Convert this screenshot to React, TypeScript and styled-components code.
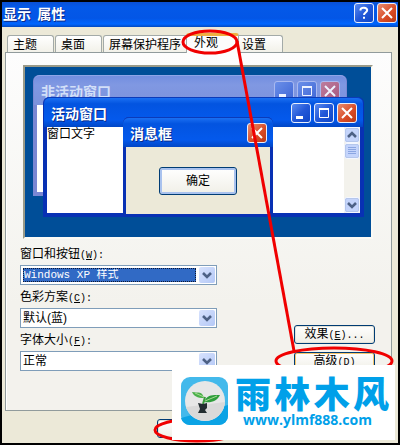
import React from 'react';
import styled, { createGlobalStyle, css } from 'styled-components';

const Global = createGlobalStyle`
  * { box-sizing: border-box; }
  body { margin: 0; background: #000; }
  body, button, select { font-family: "Liberation Sans", "Noto Sans CJK SC", sans-serif; font-size: 12px; line-height: 14px; color: #000; }
  button, select { margin: 0; }
`;

const Screen = styled.main`
  position: relative;
  min-height: 100vh;
  padding: 2px;
  background: #000;
  display: flex;
  overflow: hidden;
`;

const Dialog = styled.section`
  flex: 1;
  min-width: 0;
  display: flex;
  flex-direction: column;
  background: #ece9d8;
`;

const TitleBar = styled.header`
  display: flex;
  align-items: center;
  justify-content: space-between;
  height: 25px;
  padding: 0 1px 3px;
  background: linear-gradient(#0a50d4, #0459e8 20%, #0356e6 65%, #0066ff 88%, #0148c0);
`;

const titleText = css`
  margin: 0;
  font-size: 14px;
  line-height: 16px;
  font-weight: 700;
  font-family: "Noto Sans CJK SC", sans-serif;
`;

const Title = styled.h1`
  ${titleText}
  color: #fff;
  text-shadow: 1px 1px #0a2a88;
`;

const Controls = styled.div`
  display: flex;
  gap: 3px;
`;

const ControlButton = styled.button<{ $close?: boolean; $faded?: boolean }>`
  width: 20px;
  height: 20px;
  padding: 0;
  display: flex;
  border: 1px solid ${p => (p.$faded ? '#a9b9f0' : '#e9effc')};
  border-radius: 3px;
  background: ${p =>
    p.$close
      ? p.$faded
        ? 'linear-gradient(135deg, #bd7d9d, #a85880)'
        : 'linear-gradient(135deg, #e88c70, #d84a24 60%, #b83a18)'
      : p.$faded
        ? 'linear-gradient(135deg, #6b8fe9, #4067d5)'
        : 'linear-gradient(135deg, #5b8bf0, #2358d8 50%, #0e46c8)'};
`;

const Body = styled.div`
  flex: 1;
  display: flex;
  flex-direction: column;
  padding: 6px 6px 32px 3px;
`;

const Tabs = styled.nav`
  display: flex;
  align-items: flex-end;
  gap: 1px;
  height: 19px;
  padding-left: 2px;
`;

const Tab = styled.button<{ $active?: boolean }>`
  height: ${p => (p.$active ? 20 : 17)}px;
  padding: 2px 8px 0 5px;
  min-width: 47px;
  border: 1px solid #a3aaa8;
  border-bottom: 0;
  border-radius: 3px 3px 0 0;
  background: linear-gradient(#fff, #f2f1e9);
  white-space: nowrap;
  text-align: left;
  ${p => p.$active && css`
    border-top: 3px solid #efaf42;
    background: #fcfcfc;
    margin: 0 -4px -1px -5px;
    padding: 0 20px 4px 7px;
    z-index: 1;
  `}
`;

const Panel = styled.div`
  flex: 1;
  padding: 12px 16px 8px 14px;
  border: 1px solid #919b9c;
  box-shadow: inset 1px 0 #fff;
  background: linear-gradient(#fdfdfd, #f3f2ed 70%);
`;

const Preview = styled.div`
  position: relative;
  height: 174px;
  margin: 0 2px 8px 3px;
  border: 2px solid;
  border-color: #9a9a88 #fbfaf5 #fbfaf5 #9a9a88;
  background: #004e98;
`;

const kinds = {
  inactive: css`
    top: 8px; right: 24px; bottom: 41px; left: 8px;
    border: 4px solid #7a87d3;
    background: #7f94de;
  `,
  active: css`
    top: 30px; right: 7px; bottom: 20px; left: 18px;
    border: 4px solid #0831b4;
    background: #0054e3;
  `,
  message: css`
    top: 50px; right: 98px; bottom: 20px; left: 98px;
    border: 3px solid #0831b4;
    background: #0054e3;
  `,
};

const MiniWindow = styled.section<{ $kind: keyof typeof kinds }>`
  position: absolute;
  display: flex;
  flex-direction: column;
  ${p => kinds[p.$kind]}
  border-top: 0;
  border-radius: 6px 6px 0 0;
`;

const MiniTitleBar = styled.header<{ $faded?: boolean }>`
  height: 30px;
  margin: 0 -3px;
  padding: 0 6px 0 7px;
  display: flex;
  align-items: center;
  justify-content: space-between;
  border-top: 1px solid ${p => (p.$faded ? '#8fa5e8' : '#0b3bb9')};
  border-radius: 6px 6px 0 0;
  background: ${p =>
    p.$faded
      ? 'linear-gradient(#738ee0, #8098e2 30%, #7c92dc)'
      : 'linear-gradient(#1b70f2, #0354e0 20%, #0459ec 75%, #0146c5)'};
`;

const MiniTitle = styled.h2<{ $faded?: boolean }>`
  ${titleText}
  color: ${p => (p.$faded ? '#d2dff8' : '#fff')};
  text-shadow: ${p => (p.$faded ? 'none' : '1px 1px #0a2a88')};
`;

const MiniBody = styled.div<{ $beige?: boolean }>`
  flex: 1;
  display: flex;
  justify-content: ${p => (p.$beige ? 'center' : 'space-between')};
  align-items: ${p => (p.$beige ? 'center' : 'stretch')};
  background: ${p => (p.$beige ? '#ece9d8' : '#fff')};
`;

const ScrollBar = styled.div`
  display: flex;
  flex-direction: column;
  width: 16px;
  background: #f3f2ec;
`;

const ScrollPart = styled.button<{ $last?: boolean }>`
  width: 16px;
  height: 16px;
  padding: 0;
  display: flex;
  align-items: center;
  justify-content: center;
  border: 1px solid #f4f7ff;
  outline: 1px solid #b5c7ec;
  outline-offset: -2px;
  border-radius: 3px;
  background: #c4d4fb;
  margin-top: ${p => (p.$last ? 'auto' : 0)};
`;

const PushButton = styled.button<{ $tall?: boolean; $hot?: boolean }>`
  width: ${p => (p.$tall ? 78 : 81)}px;
  height: ${p => (p.$tall ? 28 : 19)}px;
  padding: 0;
  border: 1px solid #003c74;
  border-radius: 3px;
  background: linear-gradient(#fff, #f0efe7);
  box-shadow: inset 0 0 0 ${p => (p.$tall ? 2 : 1)}px ${p => (p.$hot ? '#f5c56b' : p.$tall ? '#a9c2ee' : '#e4e2d6')};
`;

const Settings = styled.div`
  display: flex;
  justify-content: space-between;
  align-items: flex-end;
`;

const Fields = styled.div`
  display: grid;
  gap: 5px;
  width: 197px;
`;

const Field = styled.div`
  display: grid;
  gap: 2px;
`;

const Label = styled.label`
  line-height: 15px;
`;

const SelectBox = styled.div`
  display: flex;
  align-items: center;
  gap: 3px;
  height: 20px;
  padding: 1px;
  border: 1px solid #7f9db9;
  background: #fff;
`;

const Select = styled.select<{ $selected?: boolean }>`
  flex: 1;
  min-width: 0;
  height: 16px;
  margin-left: 1px;
  padding: 0;
  appearance: none;
  border: 0;
  border-radius: 0;
  outline: none;
  background: #fff;
  ${p => p.$selected && css`
    height: 14px;
    border: 1px dotted #101830;
    background: #316ac5;
    color: #fff;
    font-family: "Liberation Mono", "Noto Sans CJK SC", monospace;
    line-height: 12px;
    font-size: 11px;
  `}
`;

const DropArrow = styled.span`
  width: 16px;
  height: 16px;
  display: flex;
  align-items: center;
  justify-content: center;
  border-radius: 2px;
  background: linear-gradient(135deg, #d7e2fd, #b4c8f6);
`;

const Actions = styled.div`
  display: grid;
  gap: 8px;
`;

const Key = styled.span`
  font-family: "Liberation Mono", monospace;
  font-size: 10px;
`;

const Footer = styled.footer`
  position: absolute;
  left: 157px;
  bottom: 5px;
`;

const Annotation = styled.svg`
  position: absolute;
  top: 0;
  left: 0;
  z-index: 2;
  pointer-events: none;
`;

const Watermark = styled.aside`
  position: absolute;
  right: 5px;
  bottom: 5px;
  z-index: 3;
  display: flex;
  align-items: flex-start;
  gap: 6px;
  width: 223px;
  height: 75px;
  padding: 12px 6px 0 9px;
  background: #fff;
`;

const Brand = styled.div`
  flex: 1;
  color: #00a0e9;
`;

const BrandName = styled.div`
  display: flex;
  justify-content: space-between;
  height: 34px;
  font: 900 36px/31px "Noto Sans CJK SC", sans-serif;
`;

const BrandLink = styled.a`
  display: block;
  padding-left: 8px;
  color: inherit;
  text-decoration: none;
  font: 700 14px/17px "Open Sans", sans-serif;
`;

type Glyph = 'min' | 'max' | 'close' | 'help';

const glyphs: Record<Glyph, React.ReactNode> = {
  min: <path d="M4 13.5h7" strokeWidth="3" />,
  max: <><path d="M4.5 4.5h9v9h-9z" strokeWidth="1" /><path d="M4 5h10" strokeWidth="2" /></>,
  close: <path d="M4 4l10 10M14 4L4 14" strokeWidth="2" />,
  help: <><path d="M5.5 6.5V5.5C6 3 12 3 12.2 6c0 2.5-3.2 2.4-3.2 5" strokeWidth="2" /><path d="M8 13.8h2" strokeWidth="2" /></>,
};

function Control({ type, faded }: { type: Glyph; faded?: boolean }) {
  return (
    <ControlButton aria-label={type} $close={type === 'close'} $faded={faded}>
      <svg width="18" height="18" fill="none" stroke={faded ? '#eef2ff' : '#fff'}>{glyphs[type]}</svg>
    </ControlButton>
  );
}

function Chevron({ up }: { up?: boolean }) {
  return (
    <svg width="10" height="8" fill="none" stroke="#4d6185" strokeWidth="2.6">
      <path d={up ? 'M1 6l4-4 4 4' : 'M1 2l4 4 4-4'} />
    </svg>
  );
}

function Access({ letter, after }: { letter: string; after: string }) {
  return <Key>(<u>{letter}</u>){after}</Key>;
}

function Choice({ id, label, letter, value, selected }: { id: string; label: string; letter: string; value: string; selected?: boolean }) {
  return (
    <Field>
      <Label htmlFor={id}>{label}<Access letter={letter} after=":" /></Label>
      <SelectBox>
        <Select id={id} $selected={selected}><option>{value}</option></Select>
        <DropArrow><Chevron /></DropArrow>
      </SelectBox>
    </Field>
  );
}

function MiniHeader({ title, faded, controls }: { title: string; faded?: boolean; controls: Glyph[] }) {
  return (
    <MiniTitleBar $faded={faded}>
      <MiniTitle $faded={faded}>{title}</MiniTitle>
      <Controls>{controls.map(c => <Control key={c} type={c} faded={faded} />)}</Controls>
    </MiniTitleBar>
  );
}

function Logo() {
  return (
    <svg width="48" height="48" viewBox="0 0 48 48">
      <rect width="47" height="48" rx="9" fill="#43b9eb" />
      <path d="M0 41L47 28v11a9 9 0 0 1-9 9H9a9 9 0 0 1-9-7z" fill="#0ba3e5" />
      <circle cx="24" cy="24" r="20" fill="#e7e7e7" />
      <path d="M5 30l39-5A20 20 0 0 1 5 30z" fill="#d9d9d9" />
      <path d="M11 15c7 1 10-1 12 6-7 0-10-2-12-6z" fill="#4bb04a" />
      <path d="M39 18c-6 0-13-1-16 7 8 1 13-1 16-7z" fill="#2f9e3c" />
      <path d="M14 16l9 4M24 24l12-5" stroke="#a5db91" />
      <path d="M22 27l2-7" stroke="#3a9a3c" strokeWidth="2" />
      <path d="M17 26l5 1 4-1v5l-2 2 2 3h-9l2-4z" fill="#222c30" />
    </svg>
  );
}

const tabs = ['主题', '桌面', '屏幕保护程序', '外观', '设置'];

export default function App() {
  return (
    <Screen>
      <Global />
      <Dialog aria-label="显示 属性">
        <TitleBar>
          <Title>显示&nbsp; 属性</Title>
          <Controls><Control type="help" /><Control type="close" /></Controls>
        </TitleBar>
        <Body>
          <Tabs role="tablist">
            {tabs.map(t => <Tab key={t} role="tab" aria-selected={t === '外观'} $active={t === '外观'}>{t}</Tab>)}
          </Tabs>
          <Panel role="tabpanel">
            <Preview>
              <MiniWindow $kind="inactive">
                <MiniHeader title="非活动窗口" faded controls={['min', 'max', 'close']} />
                <MiniBody />
              </MiniWindow>
              <MiniWindow $kind="active">
                <MiniHeader title="活动窗口" controls={['min', 'max', 'close']} />
                <MiniBody>
                  <span>窗口文字</span>
                  <ScrollBar>
                    <ScrollPart aria-label="up"><Chevron up /></ScrollPart>
                    <ScrollPart aria-label="thumb">
                      <svg width="8" height="8" stroke="#8ba6e2"><path d="M0 .5h8M0 2.5h8M0 4.5h8M0 6.5h8" /></svg>
                    </ScrollPart>
                    <ScrollPart aria-label="down" $last><Chevron /></ScrollPart>
                  </ScrollBar>
                </MiniBody>
              </MiniWindow>
              <MiniWindow $kind="message">
                <MiniHeader title="消息框" controls={['close']} />
                <MiniBody $beige><PushButton $tall>确定</PushButton></MiniBody>
              </MiniWindow>
            </Preview>
            <Settings>
              <Fields>
                <Choice id="style" label="窗口和按钮" letter="W" value="Windows XP 样式" selected />
                <Choice id="scheme" label="色彩方案" letter="C" value="默认(蓝)" />
                <Choice id="size" label="字体大小" letter="F" value="正常" />
              </Fields>
              <Actions>
                <PushButton>效果<Access letter="E" after="..." /></PushButton>
                <PushButton $hot>高级<Access letter="D" after="" /></PushButton>
              </Actions>
            </Settings>
          </Panel>
        </Body>
      </Dialog>
      <Footer><PushButton aria-label="确定" /></Footer>
      <Annotation width="400" height="445" fill="none" stroke="#f00000" strokeWidth="3">
        <ellipse cx="210" cy="42" rx="27" ry="11" />
        <path d="M237 41L294 351" strokeWidth="3" />
        <ellipse cx="334" cy="361" rx="58" ry="13" />
        <ellipse cx="197" cy="430" rx="42" ry="11" />
      </Annotation>
      <Watermark>
        <Logo />
        <Brand>
          <BrandName>{[...'雨林木风'].map(c => <span key={c}>{c}</span>)}</BrandName>
          <BrandLink href="#home">www.ylmf888.com</BrandLink>
        </Brand>
      </Watermark>
    </Screen>
  );
}
